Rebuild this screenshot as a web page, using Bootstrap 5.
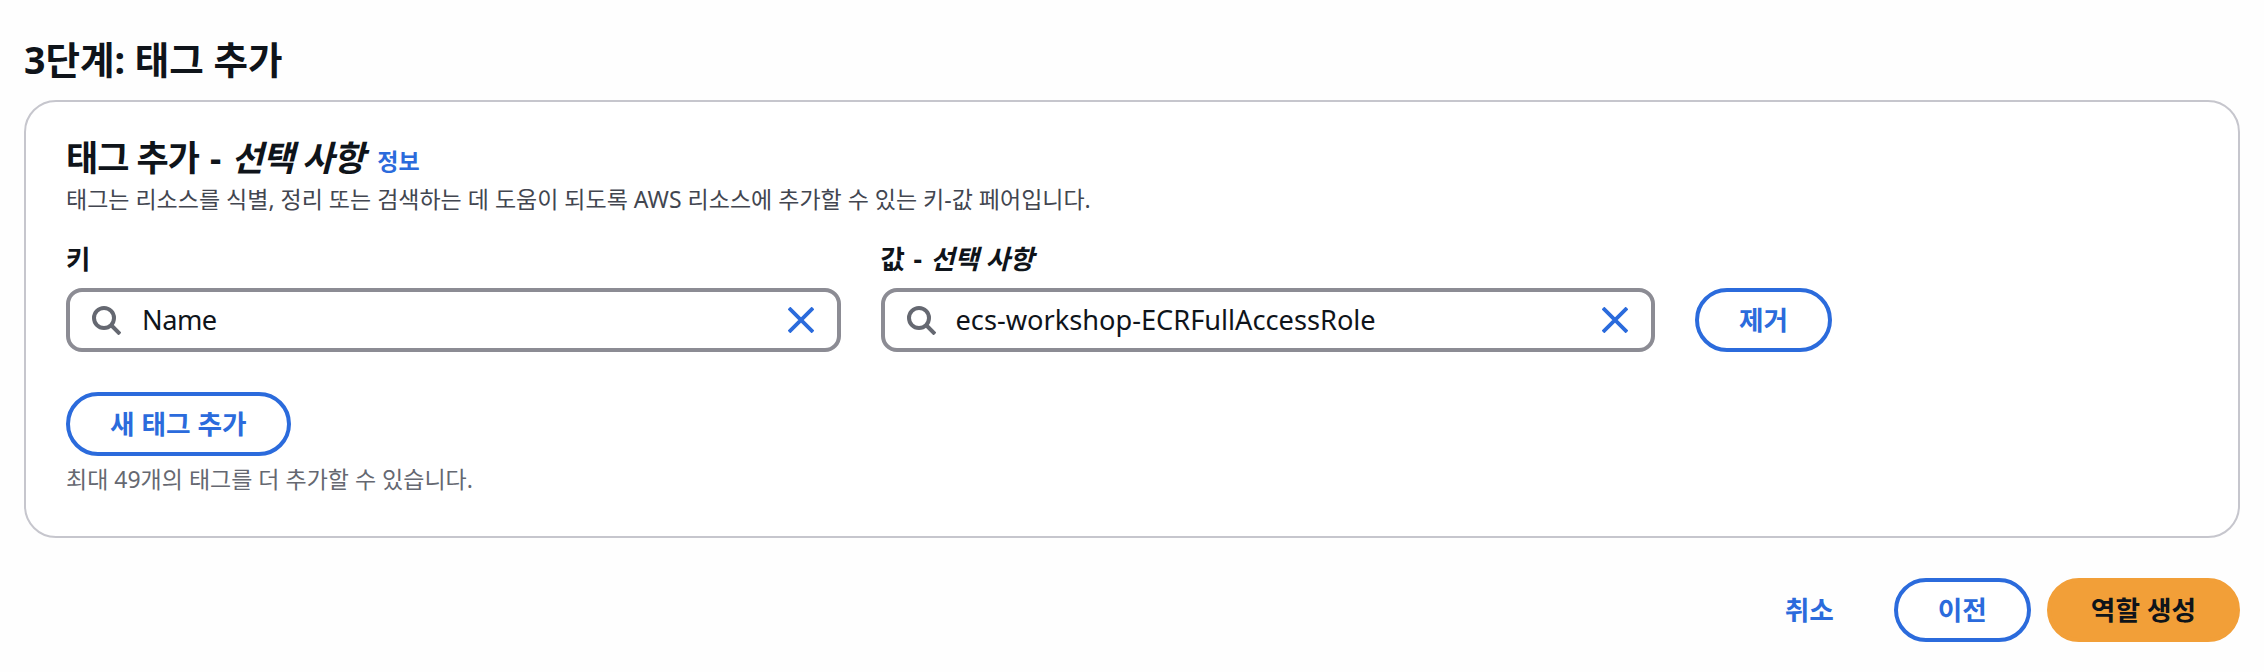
<!DOCTYPE html>
<html lang="ko">
<head>
<meta charset="utf-8">
<meta name="viewport" content="width=device-width, initial-scale=1">
<title>3단계: 태그 추가</title>
<link href="https://cdn.jsdelivr.net/npm/bootstrap@5.3.0/dist/css/bootstrap.min.css" rel="stylesheet">
<style>
  body { background: #fefefe; color: #0f141a; font-family: "Noto Sans", "Noto Sans CJK KR", sans-serif; }
  .wizard { padding: 37px 24px 0; }
  .step-title { font-size: 37.5px; line-height: 46px; font-weight: 700; margin: 0 0 17px; }
  .panel { height: 438px; border: 2px solid #c6c6cd; border-radius: 32px; padding: 34px 40px 0; background: #fff; }
  .panel-title { font-size: 35px; line-height: 44px; font-weight: 700; letter-spacing: -1px; margin: 0 0 4px; }
  .dash { margin: 0 3px; }
  .field-label .dash { margin: 0 2px; }
  .info-link { display: inline-block; font-size: 23px; letter-spacing: 0; line-height: 30px; color: #2b6bdc; text-decoration: none; margin-left: 13px; margin-bottom: 1px; vertical-align: 1px; }
  .desc { font-size: 23px; line-height: 30px; color: #424650; margin: 0 0 29px; }
  .tag-row { gap: 40px; margin-bottom: 40px; }
  .field { width: 774.5px; }
  .field-label { font-size: 26.5px; line-height: 32px; font-weight: 700; margin: 0 0 13px; letter-spacing: -.2px; }
  .search-box { height: 64px; border: 4px solid #8c8c94; border-radius: 16px; padding: 0 23px 0 22px; background: #fff; }
  .search-box input { font-size: 27.2px; line-height: 38px; margin-left: 20px; color: #0f141a; }
  #tag-key { letter-spacing: -.5px; margin-left: 21px; }
  .pill { height: 64px; border: 4px solid #2b6bdc; border-radius: 32px; color: #2b6bdc; background: #fff; font-size: 26.7px; line-height: 38px; font-weight: 700; padding: 0 40px 1px; }
  .pill-primary { border-color: #f29f38; background: #f29f38; color: #0f141a; }
  .pill-link { border-color: transparent; background: transparent; }
  .hint { font-size: 23px; line-height: 30px; color: #656871; margin: 8px 0 0; }
  .actions { gap: 16px; margin-top: 40px; }
</style>
</head>
<body>
<main class="wizard">
  <h1 class="step-title">3단계: 태그 추가</h1>
  <section class="panel">
    <h2 class="panel-title">태그 추가 <span class="dash">-</span> <em>선택 사항</em><a href="#" class="info-link">정보</a></h2>
    <p class="desc">태그는 리소스를 식별, 정리 또는 검색하는 데 도움이 되도록 AWS 리소스에 추가할 수 있는 키-값 페어입니다.</p>
    <div class="tag-row d-flex align-items-end">
      <div class="field">
        <label class="field-label d-block" for="tag-key">키</label>
        <div class="search-box d-flex align-items-center">
          <svg width="29" height="29" viewBox="0 0 29 29" fill="none" stroke="#656871" stroke-width="4"><circle cx="12" cy="12" r="10"/><path d="M19 19l9 9"/></svg>
          <input id="tag-key" class="border-0 p-0 flex-grow-1 bg-transparent" value="Name">
          <svg width="26" height="26" viewBox="0 0 26 26" fill="none" stroke="#2b6bdc" stroke-width="3.8"><path d="M1 1l24 24M25 1L1 25"/></svg>
        </div>
      </div>
      <div class="field">
        <label class="field-label d-block" for="tag-value">값 <span class="dash">-</span> <em>선택 사항</em></label>
        <div class="search-box d-flex align-items-center">
          <svg width="29" height="29" viewBox="0 0 29 29" fill="none" stroke="#656871" stroke-width="4"><circle cx="12" cy="12" r="10"/><path d="M19 19l9 9"/></svg>
          <input id="tag-value" class="border-0 p-0 flex-grow-1 bg-transparent" value="ecs-workshop-ECRFullAccessRole">
          <svg width="26" height="26" viewBox="0 0 26 26" fill="none" stroke="#2b6bdc" stroke-width="3.8"><path d="M1 1l24 24M25 1L1 25"/></svg>
        </div>
      </div>
      <button type="button" class="btn pill">제거</button>
    </div>
    <button type="button" class="btn pill d-block">새 태그 추가</button>
    <p class="hint">최대 49개의 태그를 더 추가할 수 있습니다.</p>
  </section>
  <div class="actions d-flex justify-content-end">
    <button type="button" class="btn pill pill-link">취소</button>
    <button type="button" class="btn pill">이전</button>
    <button type="button" class="btn pill pill-primary">역할 생성</button>
  </div>
</main>
<script src="https://cdn.jsdelivr.net/npm/bootstrap@5.3.0/dist/js/bootstrap.bundle.min.js"></script>
</body>
</html>
